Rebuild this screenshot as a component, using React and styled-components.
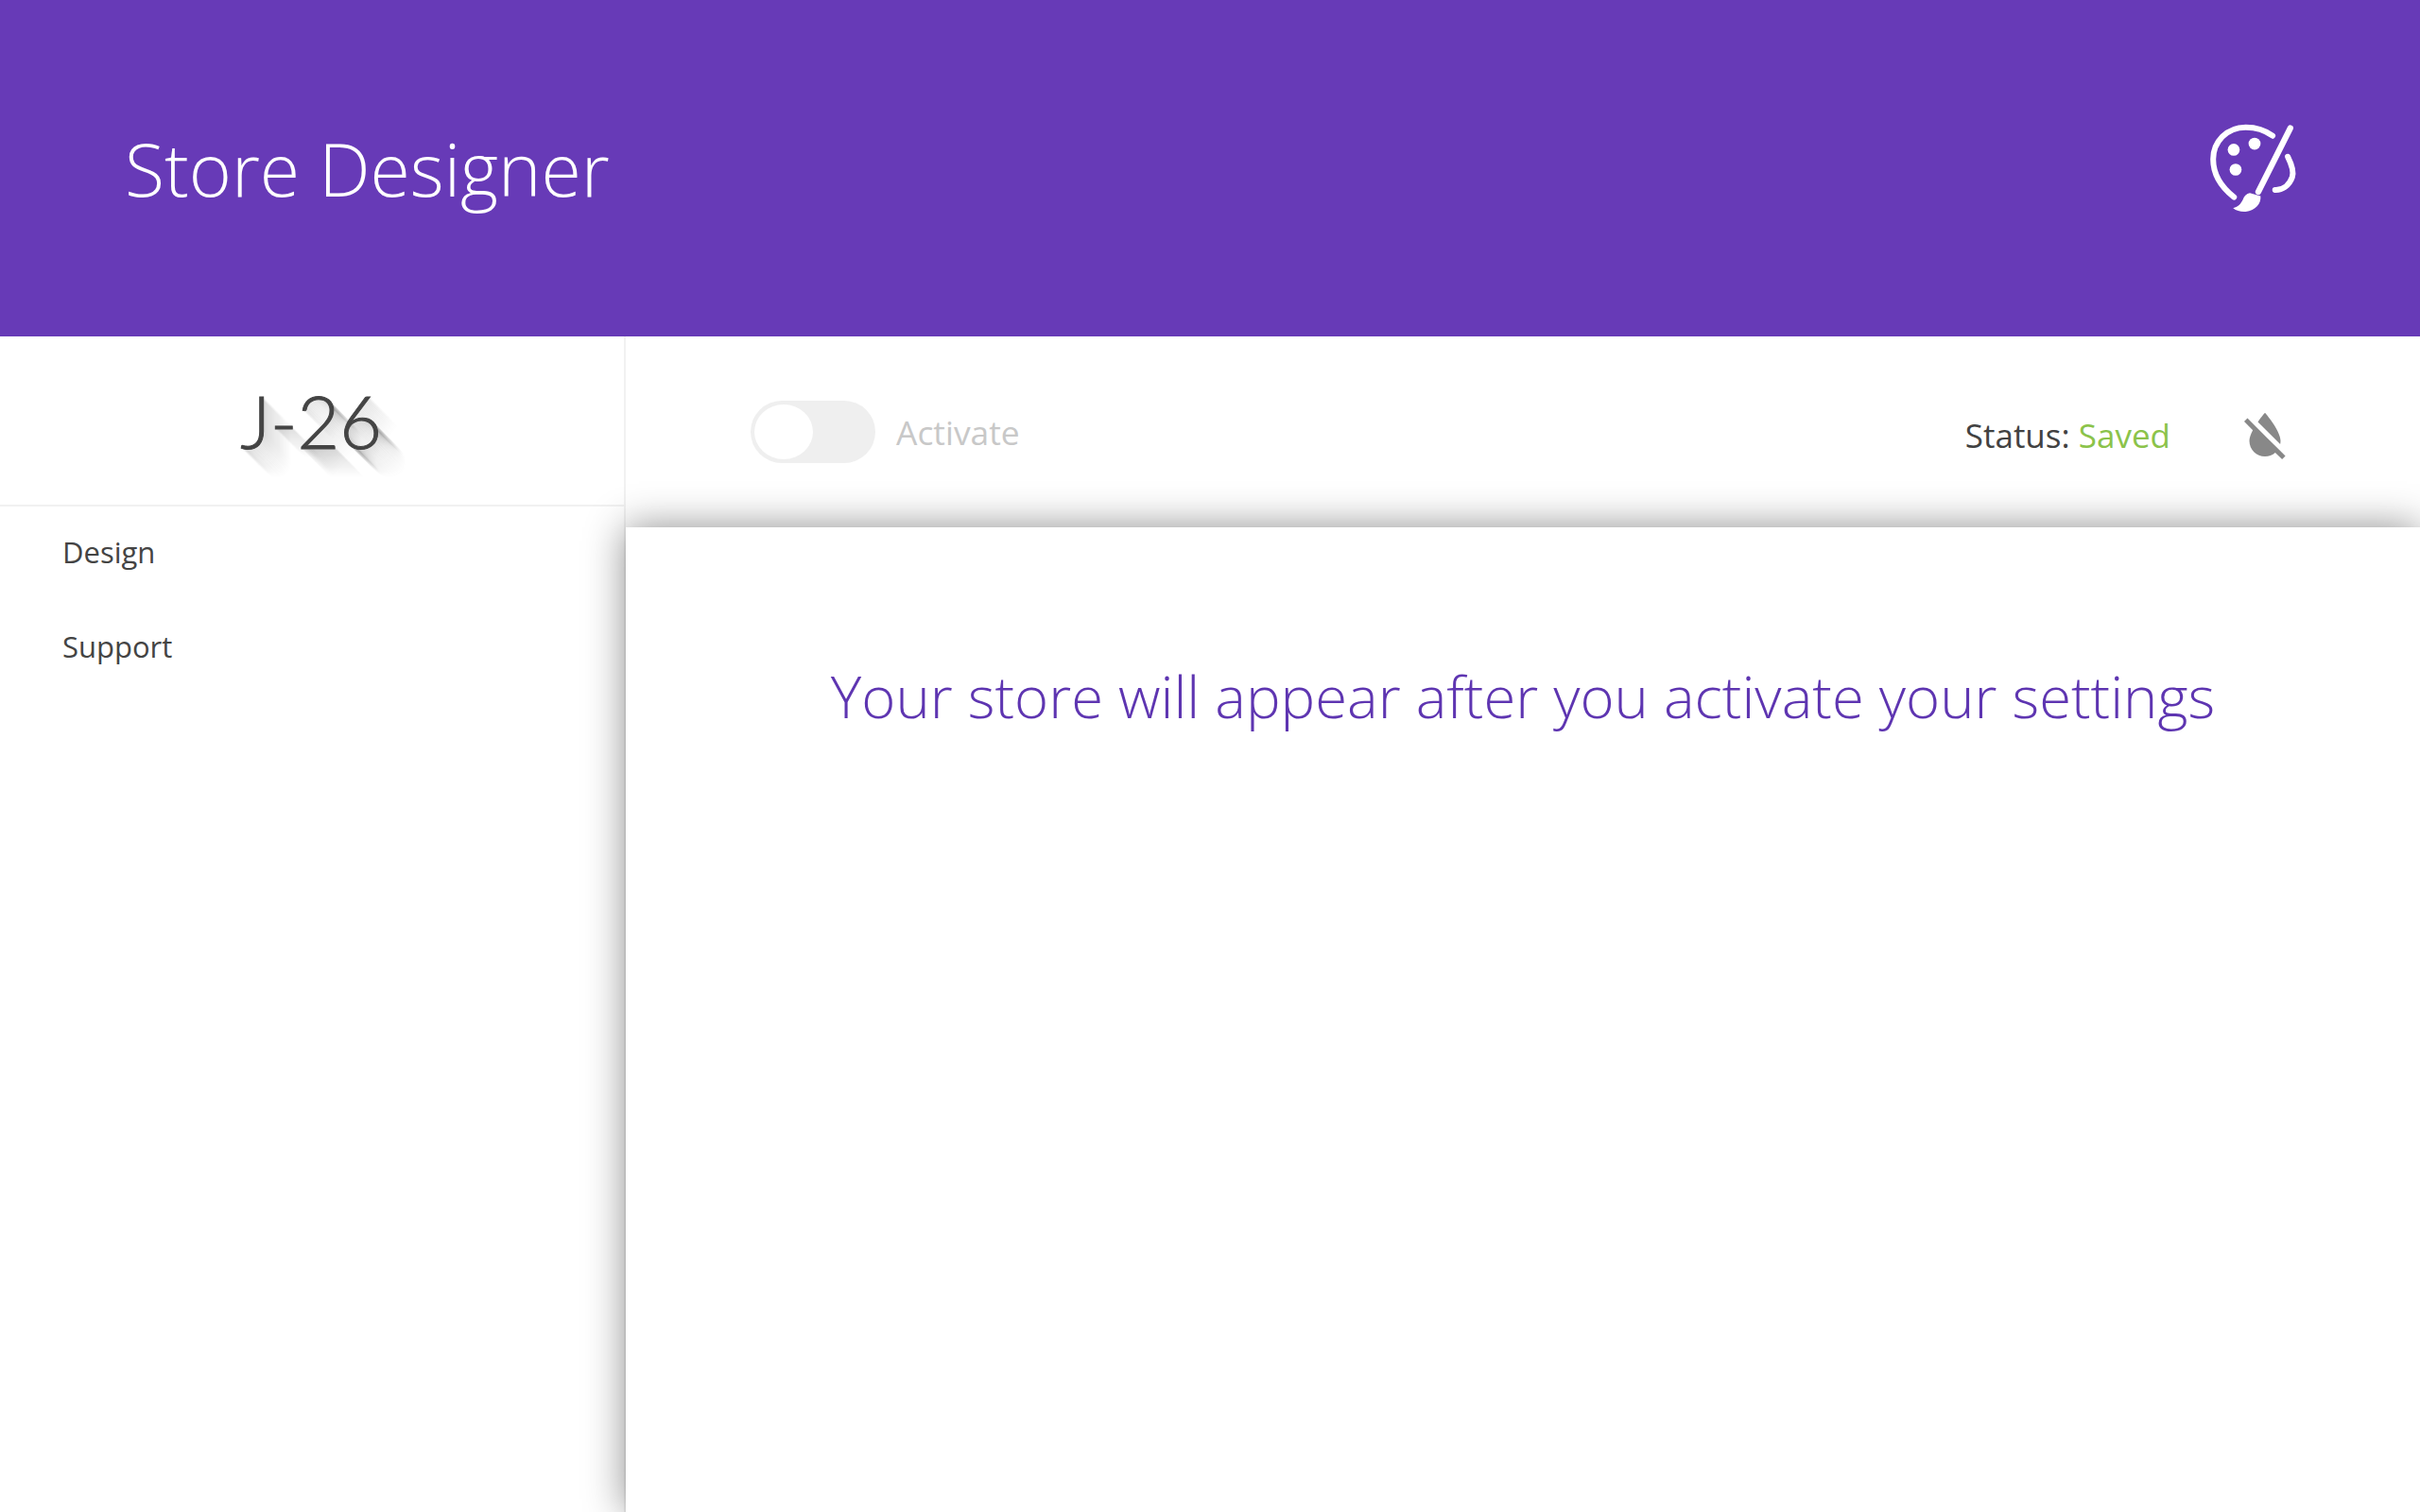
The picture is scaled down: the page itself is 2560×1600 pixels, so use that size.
import React from 'react';
import styled, { createGlobalStyle } from 'styled-components';
import { MdFormatColorReset } from 'react-icons/md';

const GlobalStyle = createGlobalStyle`
    html, body {
        margin: 0;
        padding: 0;
        background: #fff;
        font-family: "Open Sans", "Liberation Sans", sans-serif;
    }
    * { box-sizing: border-box; }
`;

// long diagonal shadow behind the logo, fades out with distance
const longShadow = (len) => {
    const parts = [];
    for (let i = 1; i <= len; i++) {
        parts.push(`${i}px ${i}px 0 rgba(0,0,0,${(0.04 * (1 - i / len)).toFixed(3)})`);
    }
    return parts.join(', ');
};

const Page = styled.div`
    display: flex;
    flex-direction: column;
    height: 1600px;
    overflow: hidden;
`;

const Header = styled.header`
    flex: 0 0 356px;
    display: flex;
    align-items: center;
    justify-content: space-between;
    padding: 0 129px 0 132px;
    background: #673ab7;
`;

const Title = styled.h1`
    margin: 0;
    font-size: 77px;
    font-weight: 300;
    color: #fff;
`;

const Body = styled.div`
    flex: 1;
    display: grid;
    grid-template-columns: 662px 1fr;
`;

const Sidebar = styled.aside`
    border-right: 2px solid #f1f1f1;
`;

const LogoRow = styled.div`
    display: flex;
    align-items: center;
    justify-content: center;
    height: 180px;
    border-bottom: 2px solid #f1f1f1;
`;

const Logo = styled.span`
    margin: 0 2px 0 0;
    font-family: "Lato", sans-serif;
    font-size: 77px;
    font-weight: 300;
    letter-spacing: 0;
    color: #444;
    -webkit-text-stroke: 1px #444;
    text-shadow: ${longShadow(32)};
`;

const Nav = styled.nav`
    display: flex;
    flex-direction: column;
    margin-top: -2px;
    padding: 0 0 0 66px;
`;

const NavItem = styled.a`
    display: flex;
    align-items: center;
    height: 100px;
    font-size: 31px;
    color: #444;
`;

const Main = styled.main`
    display: flex;
    flex-direction: column;
`;

const Toolbar = styled.div`
    flex: 0 0 202px;
    display: flex;
    align-items: center;
    padding: 0 131px 0 132px;
`;

const Toggle = styled.div`
    width: 132px;
    height: 66px;
    padding: 4px;
    border-radius: 33px;
    background: #efefef;
`;

const Knob = styled.div`
    width: 62px;
    height: 58px;
    border-radius: 50%;
    background: #fff;
`;

const ToggleLabel = styled.span`
    margin-left: 22px;
    margin-bottom: 1px;
    font-size: 35.4px;
    color: #c8c8c8;
`;

const Status = styled.div`
    margin-left: auto;
    margin-top: 6px;
    font-size: 35px;
    color: #424242;
`;

const Saved = styled.span`
    color: #8bc34a;
`;

const ResetIcon = styled(MdFormatColorReset)`
    margin: 8px 0 0 67px;
    font-size: 66px;
    color: #888;
`;

const Panel = styled.section`
    flex: 1;
    position: relative;
    padding-top: 136px;
    text-align: center;
    background: #fff;
    box-shadow: 0 0 40px rgba(0, 0, 0, 0.45);
`;

const Message = styled.h2`
    margin: 0;
    font-size: 61.6px;
    font-weight: 300;
    color: #5e35b1;
`;

const PaletteIcon = () => (
    <svg width="94" height="97" viewBox="110 90 280 290" fill="none" stroke="#fff" strokeLinecap="round">
        <path strokeWidth="18" d="M310 131 C285 112 255 104 225 104 C165 104 122 150 122 205 C122 255 150 295 188 325" />
        <path strokeWidth="18" d="M358 197 C372 225 378 245 372 262 C362 290 340 303 318 302" />
        <path strokeWidth="19" d="M366 107 L265 308" />
        <path stroke="none" fill="#fff" d="M238 312 L272 322 C274 347 256 367 225 371 C210 372 196 369 185 360 C203 355 210 345 216 333 C220 321 228 314 238 312 Z" />
        <circle stroke="none" fill="#fff" cx="187" cy="175" r="19" />
        <circle stroke="none" fill="#fff" cx="253" cy="156" r="19" />
        <circle stroke="none" fill="#fff" cx="193" cy="238" r="19" />
    </svg>
);

const App = () => {
    return (
        <>
            <GlobalStyle />
            <Page>
                <Header>
                    <Title>Store Designer</Title>
                    <PaletteIcon />
                </Header>
                <Body>
                    <Sidebar>
                        <LogoRow>
                            <Logo>J-26</Logo>
                        </LogoRow>
                        <Nav>
                            <NavItem>Design</NavItem>
                            <NavItem>Support</NavItem>
                        </Nav>
                    </Sidebar>
                    <Main>
                        <Toolbar>
                            <Toggle><Knob /></Toggle>
                            <ToggleLabel>Activate</ToggleLabel>
                            <Status>Status: <Saved>Saved</Saved></Status>
                            <ResetIcon />
                        </Toolbar>
                        <Panel>
                            <Message>Your store will appear after you activate your settings</Message>
                        </Panel>
                    </Main>
                </Body>
            </Page>
        </>
    );
};

export default App;
